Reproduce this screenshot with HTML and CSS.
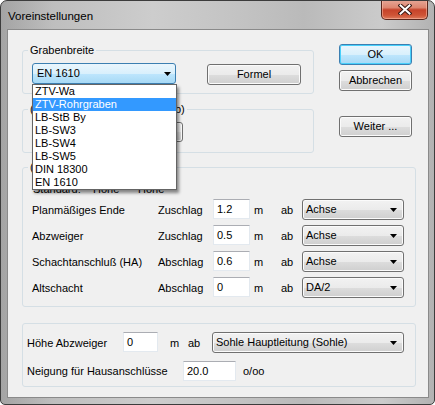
FILE: index.html
```html
<!DOCTYPE html>
<html>
<head>
<meta charset="utf-8">
<title>Voreinstellungen</title>
<link rel="stylesheet" href="styles.css">
</head>
<body>
<div class="window">
  <div class="titlebar">
    <span class="title">Voreinstellungen</span>
    <div class="close">
      <svg width="14" height="11" viewBox="0 0 14 11">
        <path d="M2.5 1.5 L11.5 9.5 M11.5 1.5 L2.5 9.5" stroke="#3a1a14" stroke-width="4" stroke-linecap="square" fill="none"/>
        <path d="M2.5 1.5 L11.5 9.5 M11.5 1.5 L2.5 9.5" stroke="#ffffff" stroke-width="2" stroke-linecap="square" fill="none"/>
      </svg>
    </div>
  </div>
  <div class="client">
    <div class="top">
      <div class="left">
        <div class="group g1">
          <div class="legend">Grabenbreite</div>
          <div class="g1-body">
            <div class="combo-wrap">
              <div class="combo focus"><span>EN 1610</span><svg class="arrow" width="7" height="4" viewBox="0 0 7 4"><path d="M0 0H7L3.5 4Z"/></svg></div>
              <ul class="list">
                <li>ZTV-Wa</li>
                <li class="sel">ZTV-Rohrgraben</li>
                <li>LB-StB By</li>
                <li>LB-SW3</li>
                <li>LB-SW4</li>
                <li>LB-SW5</li>
                <li>DIN 18300</li>
                <li>EN 1610</li>
              </ul>
            </div>
            <div class="btn formel">Formel</div>
          </div>
        </div>
        <div class="group g2">
          <div class="legend">(Standardwerte Grabentiefe ab)</div>
          <div class="g2-body"><div class="btn small">...</div></div>
        </div>
      </div>
      <div class="right">
        <div class="btn default">OK</div>
        <div class="btn cancel">Abbrechen</div>
        <div class="btn weiter">Weiter ...</div>
      </div>
    </div>

    <div class="group g3">
      <div class="legend">(Abstände)</div>
      <div class="g3-body">
        <div class="head"><span class="h1">Standard:</span><span class="h2">Höhe</span><span>Höhe</span></div>
        <div class="row">
          <span>Planmäßiges Ende</span><span>Zuschlag</span>
          <div class="field">1.2</div><span class="unit">m</span><span>ab</span>
          <div class="combo"><span>Achse</span><svg class="arrow" width="7" height="4" viewBox="0 0 7 4"><path d="M0 0H7L3.5 4Z"/></svg></div>
        </div>
        <div class="row">
          <span>Abzweiger</span><span>Zuschlag</span>
          <div class="field">0.5</div><span class="unit">m</span><span>ab</span>
          <div class="combo"><span>Achse</span><svg class="arrow" width="7" height="4" viewBox="0 0 7 4"><path d="M0 0H7L3.5 4Z"/></svg></div>
        </div>
        <div class="row">
          <span>Schachtanschluß (HA)</span><span>Abschlag</span>
          <div class="field">0.6</div><span class="unit">m</span><span>ab</span>
          <div class="combo"><span>Achse</span><svg class="arrow" width="7" height="4" viewBox="0 0 7 4"><path d="M0 0H7L3.5 4Z"/></svg></div>
        </div>
        <div class="row">
          <span>Altschacht</span><span>Abschlag</span>
          <div class="field">0</div><span class="unit">m</span><span>ab</span>
          <div class="combo"><span>DA/2</span><svg class="arrow" width="7" height="4" viewBox="0 0 7 4"><path d="M0 0H7L3.5 4Z"/></svg></div>
        </div>
      </div>
    </div>

    <div class="group g4">
      <div class="g4-body">
        <div class="row4a">
          <span>Höhe Abzweiger</span>
          <div class="field">0</div>
          <span class="unit4">m</span><span>ab</span>
          <div class="combo"><span>Sohle Hauptleitung (Sohle)</span><svg class="arrow" width="7" height="4" viewBox="0 0 7 4"><path d="M0 0H7L3.5 4Z"/></svg></div>
        </div>
        <div class="row4b">
          <span>Neigung für Hausanschlüsse</span>
          <div class="field">20.0</div>
          <span class="permil">o/oo</span>
        </div>
      </div>
    </div>
  </div>
</div>
</body>
</html>
```

FILE: styles.css
```css
* { box-sizing: border-box; }
html, body { margin: 0; padding: 0; }
body {
  width: 435px;
  height: 405px;
  overflow: hidden;
  background: #ffffff;
  font-family: "Liberation Sans", Arial, sans-serif;
  font-size: 11px;
  color: #000;
}
.window {
  width: 435px;
  height: 405px;
  border: 1px solid #3c3c3c;
  border-radius: 7px 7px 5px 5px;
  background: linear-gradient(90deg, #a4a4a4 0%, #bebebe 12%, #cdcdcd 35%, #c3c3c3 55%, #bababa 70%, #cbcbcb 88%, #b2b2b2 100%);
  display: flex;
  flex-direction: column;
  overflow: hidden;
}
.titlebar {
  height: 28px;
  flex: none;
  display: flex;
  align-items: flex-start;
  padding-left: 7px;
}
.title {
  font-size: 11.5px;
  line-height: 14px;
  margin-top: 8px;
  color: #000;
}
.close {
  margin-left: auto;
  margin-right: 6px;
  margin-top: -1px;
  width: 47px;
  height: 20px;
  border: 1px solid #5a261c;
  border-top: none;
  border-radius: 0 0 5px 5px;
  background: linear-gradient(#e6a898 0%, #dd8670 40%, #c6432a 52%, #cf5436 80%, #dc7a5c 100%);
  box-shadow: inset 0 0 0 1px rgba(255,200,180,0.5);
  display: flex;
  align-items: center;
  justify-content: center;
}
.client {
  flex: 1;
  margin: 0 5px 6px 6px;
  border: 1px solid #8a8a8a;
  background: #f0f0f0;
  padding: 0 12px 0 14px;
}
.top { display: flex; }
.left { width: 292px; }
.right {
  margin-left: 25px;
  width: 73px;
  padding-top: 14px;
}

.group {
  border: 1px solid #d5dfe5;
  border-radius: 3px;
}
.legend {
  display: table;
  height: 13px;
  line-height: 13px;
  margin: -7px 0 -6px 5px;
  padding: 0 2px;
  background: #f0f0f0;
}
.g1 { margin-top: 20px; height: 44px; }
.g1-body {
  display: flex;
  align-items: flex-start;
  padding: 12px 0 0 9px;
}
.g2 { margin-top: 15px; height: 44px; }
.g2-body { padding: 12px 0 0 100px; }
.g3 { margin-top: 14px; height: 140px; }
.g4 { margin-top: 16px; height: 64px; }

.btn {
  height: 21px;
  border: 1px solid #707070;
  border-radius: 3px;
  background: linear-gradient(#f2f2f2 0%, #ebebeb 50%, #dddddd 51%, #cfcfcf 100%);
  box-shadow: inset 0 0 0 1px #fbfbfb;
  text-align: center;
  line-height: 19px;
}
.btn.default {
  border-color: #3c7fb1;
  background: linear-gradient(#eaf6fd 0%, #d9f0fc 50%, #bee6fd 51%, #a7d9f5 100%);
  box-shadow: inset 0 0 0 1px #48d0fb;
}
.btn.cancel { margin-top: 5px; }
.btn.weiter { margin-top: 25px; }
.btn.formel { width: 94px; margin: 1px 0 0 31px; }
.btn.small { width: 60px; height: 20px; line-height: 18px; }

.combo-wrap { position: relative; width: 144px; }
.combo {
  height: 21px;
  border: 1px solid #707070;
  border-radius: 3px;
  background: linear-gradient(#f2f2f2 0%, #ebebeb 50%, #dddddd 51%, #cfcfcf 100%);
  box-shadow: inset 0 0 0 1px #fbfbfb;
  display: flex;
  align-items: center;
  justify-content: space-between;
  padding: 0 6px 0 3px;
  line-height: 19px;
}
.combo.focus {
  border-color: #3c7fb1;
  background: linear-gradient(#eaf6fd 0%, #d9f0fc 50%, #bee6fd 51%, #a7d9f5 100%);
  box-shadow: none;
  padding: 0 4px 0 4px;
}
.arrow { flex: none; }
.arrow path { fill: #000; }

.list {
  position: absolute;
  z-index: 10;
  top: 21px;
  left: 0;
  width: 145px;
  height: 106px;
  margin: 0;
  padding: 0;
  list-style: none;
  background: #fff;
  border: 1px solid #646464;
  box-shadow: 2px 3px 3px rgba(0,0,0,0.45);
}
.list li {
  height: 13px;
  line-height: 13px;
  padding-left: 2px;
  white-space: nowrap;
}
.list li.sel { background: #3399ff; color: #fff; }

.g3-body { padding: 15px 0 0 9px; }
.head {
  display: flex;
  height: 13px;
  line-height: 13px;
  padding-left: 1px;
}
.head .h1 { width: 60px; }
.head .h2 { width: 45px; }
.row {
  display: grid;
  grid-template-columns: 126px 55px 37px 31px 21px 102px;
  align-items: center;
  height: 21px;
  margin-top: 5px;
}
.head + .row { margin-top: 3px; }
.field {
  height: 20px;
  background: #fff;
  border: 1px solid #e3e9ef;
  border-top-color: #abadb3;
  padding-left: 3px;
  line-height: 18px;
}
.row .field { align-self: start; }
.unit { padding-left: 4px; }

.g4-body { padding: 8px 0 0 4px; }
.row4a {
  display: grid;
  grid-template-columns: 96px 35px 12px 18px 24px 192px;
  align-items: center;
  height: 21px;
}
.row4a .field { align-self: start; grid-column: 2; }
.row4a .unit4 { grid-column: 4; }
.row4b {
  display: grid;
  grid-template-columns: 156px 53px auto;
  align-items: center;
  height: 20px;
  margin-top: 8px;
}
.permil { padding-left: 7px; }
```
